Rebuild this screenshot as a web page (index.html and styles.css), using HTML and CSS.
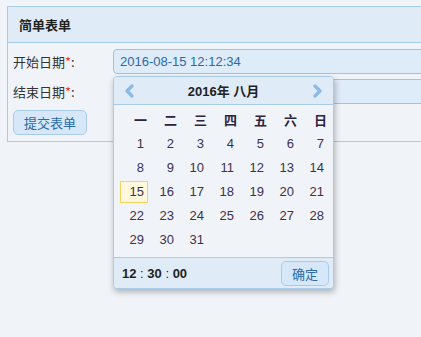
FILE: index.html
```html
<!DOCTYPE html>
<html>
<head>
<meta charset="utf-8">
<link rel="stylesheet" href="styles.css">
</head>
<body>
<div class="panel">
  <div class="panel-head">简单表单</div>
  <div class="panel-body">
    <div class="row first">
      <label class="lbl">开始日期<span class="req">*</span>:</label>
      <div class="field">
        <div class="input">2016-08-15 12:12:34</div>
        <div class="cal">
          <div class="cal-head">
            <svg class="arrow" width="10" height="14" viewBox="0 0 10 14"><polyline points="8,2 3,7 8,12" fill="none" stroke="#8cb9e6" stroke-width="3.2" stroke-linecap="round" stroke-linejoin="round"/></svg>
            <span class="cal-title">2016年 八月</span>
            <svg class="arrow" width="10" height="14" viewBox="0 0 10 14"><polyline points="2,2 7,7 2,12" fill="none" stroke="#8cb9e6" stroke-width="3.2" stroke-linecap="round" stroke-linejoin="round"/></svg>
          </div>
          <div class="cal-grid">
            <span class="wd">一</span><span class="wd">二</span><span class="wd">三</span><span class="wd">四</span><span class="wd">五</span><span class="wd">六</span><span class="wd">日</span>
            <span class="d">1</span><span class="d">2</span><span class="d">3</span><span class="d">4</span><span class="d">5</span><span class="d">6</span><span class="d">7</span>
            <span class="d">8</span><span class="d">9</span><span class="d">10</span><span class="d">11</span><span class="d">12</span><span class="d">13</span><span class="d">14</span>
            <span class="d sel">15</span><span class="d">16</span><span class="d">17</span><span class="d">18</span><span class="d">19</span><span class="d">20</span><span class="d">21</span>
            <span class="d">22</span><span class="d">23</span><span class="d">24</span><span class="d">25</span><span class="d">26</span><span class="d">27</span><span class="d">28</span>
            <span class="d">29</span><span class="d">30</span><span class="d">31</span>
          </div>
          <div class="cal-foot">
            <span class="time"><b>12</b> : <b>30</b> : <b>00</b></span>
            <button class="btn small">确定</button>
          </div>
        </div>
      </div>
    </div>
    <div class="row">
      <label class="lbl">结束日期<span class="req">*</span>:</label>
      <div class="field"><div class="input"></div></div>
    </div>
    <div class="row btn-row">
      <button class="btn">提交表单</button>
    </div>
  </div>
</div>
</body>
</html>
```
FILE: styles.css
```css
html {
  overflow: hidden;
  height: 100%;
}
html, body {
  margin: 0;
  padding: 0;
  background: #f0f4f9;
  font-family: "Liberation Sans", Arial, "Noto Sans CJK SC", sans-serif;
  font-size: 13px;
  color: #333;
}
body {
  box-sizing: border-box;
  min-height: 100%;
  padding: 6px 0 0 7px;
}
.panel {
  width: 520px;
  border: 1px solid #a9cbea;
  background: #f0f4f9;
}
.panel-head {
  height: 35px;
  line-height: 35px;
  padding-left: 11px;
  background: #dfecf8;
  border-bottom: 1px solid #a9cbea;
  font-family: "Noto Sans CJK SC", sans-serif;
  font-weight: bold;
  color: #222;
}
.panel-body {
  padding: 6px 0 6px 5px;
}
.row {
  display: flex;
  align-items: center;
  height: 25px;
  margin-bottom: 6px;
}
.row.first {
  margin-bottom: 5px;
}
.row.btn-row {
  margin-bottom: 0;
}
.lbl {
  width: 100px;
  font-family: "Noto Sans CJK SC", sans-serif;
  color: #333;
}
.req { color: #e33; }
.field {
  position: relative;
  flex: 1;
}
.input {
  height: 23px;
  line-height: 23px;
  border: 1px solid #9cc3e9;
  border-radius: 4px;
  background: #deebf8;
  padding-left: 6px;
  color: #2a6aa5;
  font-size: 13px;
}
.btn {
  font-family: "Noto Sans CJK SC", sans-serif;
  font-size: 13px;
  height: 25px;
  padding: 0 10px;
  border: 1px solid #a9cbea;
  border-radius: 5px;
  background: #d5e7f8;
  color: #2a6aa5;
  line-height: 21px;
}
.cal {
  position: absolute;
  left: 0;
  top: 27px;
  width: 219px;
  border: 1px solid #a9cbea;
  border-radius: 4px;
  background: #f0f4f9;
  box-shadow: 1px 3px 6px rgba(0,0,0,0.28);
  z-index: 2;
}
.cal-head {
  height: 27px;
  display: flex;
  align-items: center;
  justify-content: space-between;
  padding: 0 10px 0 10px;
  background: #dfecf8;
  border-bottom: 1px solid #a9cbea;
  border-radius: 4px 4px 0 0;
}
.cal-title {
  font-weight: bold;
  color: #222;
}
.cal-grid {
  display: grid;
  grid-template-columns: repeat(7, 28px);
  grid-auto-rows: 22px;
  gap: 2px;
  padding: 4px 6px 6px 6px;
}
.wd {
  font-family: "Noto Sans CJK SC", sans-serif;
  font-weight: bold;
  text-align: right;
  padding-right: 1px;
  line-height: 22px;
  color: #2b2340;
}
.d {
  text-align: right;
  padding-right: 4px;
  line-height: 22px;
  color: #3b3150;
  font-size: 13px;
}
.sel {
  background: #fff8dc;
  border: 1px solid #f4d35e;
  line-height: 20px;
  padding-right: 3px;
}
.cal-foot {
  height: 30px;
  display: flex;
  align-items: center;
  justify-content: space-between;
  padding: 0 4px 0 8px;
  background: #dfecf8;
  border-top: 1px solid #a9cbea;
  border-radius: 0 0 4px 4px;
}
.time {
  font-size: 13px;
  color: #222;
}
.time b { font-size: 13px; }
.btn.small {
  height: 25px;
  padding: 0 10px;
}
```
